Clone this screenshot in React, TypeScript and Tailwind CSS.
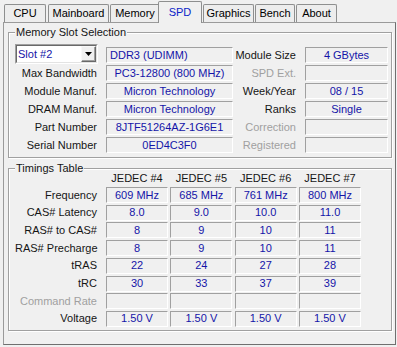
import React from 'react';
import clsx from 'clsx';

const VALUE = 'text-[#1414a8]';
const INK = 'text-[#151515]';
const DIM = 'text-[#a0a0a0]';

type TabDef = { label: string; cls: string; selected?: boolean };

const TABS: TabDef[] = [
  { label: 'CPU', cls: 'w-[42px]' },
  { label: 'Mainboard', cls: 'ml-[2px] w-[61px]' },
  { label: 'Memory', cls: 'ml-[1px] w-[50px]' },
  { label: 'SPD', cls: '-ml-[2px] w-[44px]', selected: true },
  { label: 'Graphics', cls: 'ml-[1px] w-[51px]' },
  { label: 'Bench', cls: 'ml-[1px] w-[40px]' },
  { label: 'About', cls: 'ml-[1px] w-[41px]' },
];

const SLOT_ROWS: {
  left: string;
  leftValue: string;
  right: string;
  rightValue: string;
  rightDim?: boolean;
}[] = [
  { left: 'Max Bandwidth', leftValue: 'PC3-12800 (800 MHz)', right: 'SPD Ext.', rightValue: '', rightDim: true },
  { left: 'Module Manuf.', leftValue: 'Micron Technology', right: 'Week/Year', rightValue: '08 / 15' },
  { left: 'DRAM Manuf.', leftValue: 'Micron Technology', right: 'Ranks', rightValue: 'Single' },
  { left: 'Part Number', leftValue: '8JTF51264AZ-1G6E1', right: 'Correction', rightValue: '', rightDim: true },
  { left: 'Serial Number', leftValue: '0ED4C3F0', right: 'Registered', rightValue: '', rightDim: true },
];

const COLUMNS = ['JEDEC #4', 'JEDEC #5', 'JEDEC #6', 'JEDEC #7'];

const TIMINGS: { label: string; values: string[]; dim?: boolean }[] = [
  { label: 'Frequency', values: ['609 MHz', '685 MHz', '761 MHz', '800 MHz'] },
  { label: 'CAS# Latency', values: ['8.0', '9.0', '10.0', '11.0'] },
  { label: 'RAS# to CAS#', values: ['8', '9', '10', '11'] },
  { label: 'RAS# Precharge', values: ['8', '9', '10', '11'] },
  { label: 'tRAS', values: ['22', '24', '27', '28'] },
  { label: 'tRC', values: ['30', '33', '37', '39'] },
  { label: 'Command Rate', values: ['', '', '', ''], dim: true },
  { label: 'Voltage', values: ['1.50 V', '1.50 V', '1.50 V', '1.50 V'] },
];

function Field({ children, className }: { children?: React.ReactNode; className?: string }) {
  return (
    <div
      className={clsx(
        'flex h-[16px] shrink-0 items-center justify-center overflow-hidden whitespace-nowrap border border-t-[#a0a0a0] border-l-[#a0a0a0] border-r-white border-b-white leading-none',
        VALUE,
        className
      )}
    >
      {children}
    </div>
  );
}

function Label({ children, dim, className }: { children: React.ReactNode; dim?: boolean; className?: string }) {
  return (
    <div className={clsx('shrink-0 whitespace-nowrap text-right leading-none', dim ? DIM : INK, className)}>
      {children}
    </div>
  );
}

function Group({ title, className, children }: { title: string; className?: string; children: React.ReactNode }) {
  return (
    <div
      className={clsx(
        'relative ml-[4px] w-[384px] border border-[#a0a0a0] shadow-[inset_1px_1px_0_#fff,1px_1px_0_#fff]',
        className
      )}
    >
      <span className={clsx('absolute -top-[7px] left-[6px] bg-[#f0f0f0] px-[1px] leading-[13px]', INK)}>
        {title}
      </span>
      {children}
    </div>
  );
}

function SlotCombo() {
  return (
    <div className="-mt-[2px] flex h-[20px] w-[83px] shrink-0 border border-t-[#a0a0a0] border-l-[#a0a0a0] border-r-white border-b-white">
      <div className="flex flex-1 items-center border border-t-[#696969] border-l-[#696969] border-r-[#e3e3e3] border-b-[#e3e3e3] bg-white">
        <span className={clsx('flex-1 pl-[1px] leading-none', VALUE)}>Slot #2</span>
        <div className="flex h-full w-[15px] items-center justify-center border border-t-[#f8f8f8] border-l-[#f8f8f8] border-r-[#696969] border-b-[#696969] bg-[#f0f0f0] shadow-[inset_-1px_-1px_0_#a0a0a0]">
          <svg width="7" height="4" viewBox="0 0 7 4">
            <polygon points="0,0 7,0 3.5,4" fill="#000" />
          </svg>
        </div>
      </div>
    </div>
  );
}

export default function App() {
  return (
    <div className="h-[347px] w-[397px] overflow-hidden bg-[#f0f0f0] font-['Liberation_Sans',Arial,sans-serif] text-[11px]">
      <div className="relative z-10 flex h-[22px] items-end pl-[4px]">
        {TABS.map((t) => (
          <div
            key={t.label}
            className={clsx(
              'flex shrink-0 items-center justify-center rounded-t-[2px] border border-b-0 border-[#8e8f8f] leading-none',
              t.cls,
              t.selected
                ? 'relative z-10 -mb-[1px] h-[22px] bg-[#f0f0f0] pb-[1px] text-[#0a24c8]'
                : 'h-[18px] bg-[#ededed] text-black'
            )}
          >
            {t.label}
          </div>
        ))}
      </div>

      <div className="ml-[3px] flex h-[323px] w-[393px] flex-col border border-t-[#9a9a9a] border-l-[#9a9a9a] border-r-[#6f6f6f] border-b-[#6f6f6f]">
        <Group title="Memory Slot Selection" className="mt-[9px]">
          <div className="flex flex-col gap-[2px] pt-[14px] pb-[4px] pl-[6px]">
            <div className="flex h-[16px] items-center">
              <SlotCombo />
              <Field className="ml-[8px] w-[127px] !justify-start pl-[3px]">DDR3 (UDIMM)</Field>
              <Label className="w-[63px]">Module Size</Label>
              <Field className="ml-[9px] w-[83px]">4 GBytes</Field>
            </div>
            {SLOT_ROWS.map((r) => (
              <div key={r.left} className="flex h-[16px] items-center">
                <Label className="w-[82px]">{r.left}</Label>
                <Field className="ml-[9px] w-[127px]">{r.leftValue}</Field>
                <Label className="w-[63px]" dim={r.rightDim}>
                  {r.right}
                </Label>
                <Field className="ml-[9px] w-[83px]">{r.rightValue}</Field>
              </div>
            ))}
          </div>
        </Group>

        <Group title="Timings Table" className="mt-[10px]">
          <div className="flex flex-col pt-[1px] pb-[3px] pl-[6px]">
            <div className="flex h-[16px] items-center">
              <div className="w-[82px] shrink-0" />
              <div className="ml-[9px] flex gap-[2.34px]">
                {COLUMNS.map((c) => (
                  <div key={c} className={clsx('w-[62px] text-center leading-none', INK)}>
                    {c}
                  </div>
                ))}
              </div>
            </div>
            <div className="mt-[1px] flex flex-col gap-[1.71px]">
              {TIMINGS.map((r) => (
                <div key={r.label} className="flex h-[16px] items-center">
                  <Label className="w-[82px]" dim={r.dim}>
                    {r.label}
                  </Label>
                  <div className="ml-[9px] flex gap-[2.34px]">
                    {r.values.map((v, i) => (
                      <Field key={i} className="w-[62px]">
                        {v}
                      </Field>
                    ))}
                  </div>
                </div>
              ))}
            </div>
          </div>
        </Group>
      </div>
    </div>
  );
}
